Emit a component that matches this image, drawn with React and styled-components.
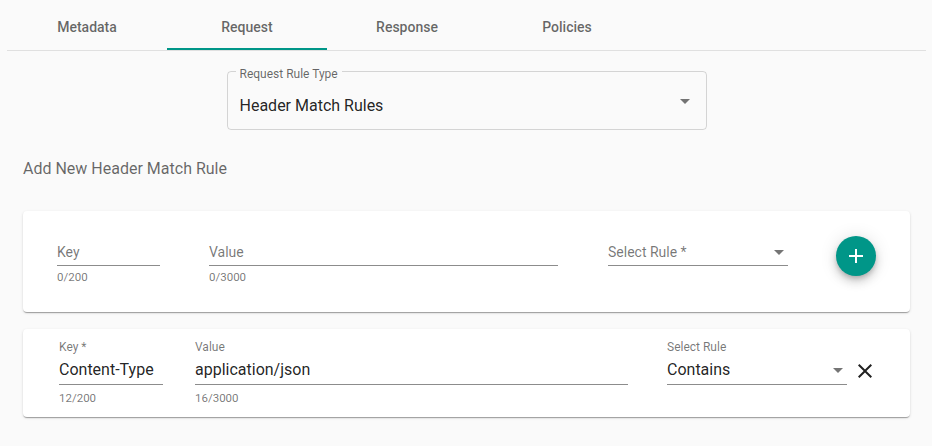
import React from 'react';
import styled, { createGlobalStyle } from 'styled-components';

const GlobalStyle = createGlobalStyle`
  body {
    margin: 0;
    background: #fafafa;
    font-family: Roboto, "Liberation Sans", Arial, sans-serif;
  }
`;

const Page = styled.div`
  width: 932px;
  height: 446px;
  padding: 0 6px 0 7px;
  box-sizing: border-box;
  background: #fafafa;
`;

const TabBar = styled.div`
  display: flex;
  height: 50px;
  border-bottom: 1px solid #e0e0e0;
`;

const Tab = styled.div`
  position: relative;
  width: 160px;
  display: flex;
  align-items: center;
  justify-content: center;
  padding-top: 3px;
  box-sizing: border-box;
  font-size: 14px;
  font-weight: 500;
  color: rgba(0, 0, 0, 0.6);

  &::after {
    content: '';
    display: ${(p) => (p.$active ? 'block' : 'none')};
    position: absolute;
    left: 0;
    right: 0;
    bottom: 0;
    height: 2px;
    background: #009688;
  }
`;

const Body = styled.div`
  padding: 0 16px;
`;

const TypeRow = styled.div`
  display: flex;
  justify-content: center;
  padding-top: 20px;
`;

const OutlinedSelect = styled.div`
  position: relative;
  width: 480px;
  height: 59px;
  box-sizing: border-box;
  border: 1px solid rgba(0, 0, 0, 0.15);
  border-radius: 4px;
  padding: 24px 12px 0;
`;

const NotchLabel = styled.span`
  position: absolute;
  top: -5px;
  left: 8px;
  padding: 0 4px;
  background: #fafafa;
  font-size: 12px;
  line-height: 14px;
  color: rgba(0, 0, 0, 0.6);
`;

const SelectValue = styled.div`
  font-size: 16px;
  line-height: 19px;
  color: rgba(0, 0, 0, 0.87);
`;

const Arrow = styled.svg`
  position: absolute;
  right: ${(p) => p.$right || 0}px;
  top: ${(p) => p.$top || 0}px;
  width: 24px;
  height: 24px;
  fill: rgba(0, 0, 0, 0.54);
`;

const SectionTitle = styled.div`
  margin-top: 29px;
  font-size: 16px;
  line-height: 19px;
  color: rgba(0, 0, 0, 0.6);
`;

const Card = styled.div`
  display: flex;
  align-items: flex-start;
  background: #fff;
  border-radius: 4px;
  box-shadow: 0 2px 1px -1px rgba(0, 0, 0, 0.2), 0 1px 1px 0 rgba(0, 0, 0, 0.14),
    0 1px 3px 0 rgba(0, 0, 0, 0.12);
  margin-top: ${(p) => p.$mt}px;
  padding: ${(p) => p.$pad};
`;

const Field = styled.div`
  position: relative;
  display: flex;
  flex-direction: column;
  width: ${(p) => (p.$w ? `${p.$w}px` : 'auto')};
  flex: ${(p) => (p.$w ? 'none' : '1')};
  margin-left: ${(p) => p.$ml || 0}px;
  margin-top: ${(p) => p.$mt || 0}px;
`;

const FieldLabel = styled.div`
  font-size: 12px;
  line-height: 14px;
  color: rgba(0, 0, 0, 0.54);
  margin-bottom: 6px;
`;

const InputLine = styled.div`
  position: relative;
  border-bottom: 1px solid rgba(0, 0, 0, 0.45);
  font-size: ${(p) => (p.$placeholder ? 14 : 16)}px;
  line-height: ${(p) => (p.$placeholder ? 20 : 19)}px;
  padding-bottom: ${(p) => (p.$placeholder ? 3 : 5)}px;
  color: ${(p) => (p.$placeholder ? 'rgba(0, 0, 0, 0.54)' : 'rgba(0, 0, 0, 0.87)')};
  white-space: nowrap;
`;

const Helper = styled.div`
  margin-top: ${(p) => p.$mt || 6}px;
  font-size: 11.5px;
  line-height: 14px;
  color: rgba(0, 0, 0, 0.54);
`;

const Fab = styled.button`
  flex: none;
  width: 40px;
  height: 40px;
  margin-left: 48px;
  border: none;
  border-radius: 50%;
  background: #009688;
  display: flex;
  align-items: center;
  justify-content: center;
  padding: 0;
  box-shadow: 0 3px 5px -1px rgba(0, 0, 0, 0.2), 0 6px 10px 0 rgba(0, 0, 0, 0.14),
    0 1px 18px 0 rgba(0, 0, 0, 0.12);

  svg {
    width: 24px;
    height: 24px;
    fill: #fff;
  }
`;

const RemoveButton = styled.div`
  flex: none;
  width: 24px;
  height: 24px;
  margin: 19px 0 0 6px;

  svg {
    width: 24px;
    height: 24px;
    fill: rgba(0, 0, 0, 0.87);
  }
`;

const DropIcon = ({ top, right }) => (
  <Arrow viewBox="0 0 24 24" $top={top} $right={right}>
    <path d="M7 10l5 5 5-5z" />
  </Arrow>
);

const tabs = ['Metadata', 'Request', 'Response', 'Policies'];

export default function App() {
  return (
    <Page>
      <GlobalStyle />
      <TabBar>
        {tabs.map((t) => (
          <Tab key={t} $active={t === 'Request'}>
            {t}
          </Tab>
        ))}
      </TabBar>
      <Body>
        <TypeRow>
          <OutlinedSelect>
            <NotchLabel>Request Rule Type</NotchLabel>
            <SelectValue>Header Match Rules</SelectValue>
            <DropIcon top={17} right={9} />
          </OutlinedSelect>
        </TypeRow>
        <SectionTitle>Add New Header Match Rule</SectionTitle>

        <Card $mt={33} $pad="25px 34px 28px">
          <Field $w={103} $mt={6}>
            <InputLine $placeholder>Key</InputLine>
            <Helper $mt={4}>0/200</Helper>
          </Field>
          <Field $ml={49} $mt={6}>
            <InputLine $placeholder>Value</InputLine>
            <Helper $mt={4}>0/3000</Helper>
          </Field>
          <Field $w={180} $ml={50} $mt={6}>
            <InputLine $placeholder>Select Rule *</InputLine>
            <DropIcon top={-2} right={-3} />
          </Field>
          <Fab>
            <svg viewBox="0 0 24 24">
              <path d="M19 13h-6v6h-2v-6H5v-2h6V5h2v6h6v2z" />
            </svg>
          </Fab>
        </Card>

        <Card $mt={17} $pad="11px 33px 12px 36px">
          <Field $w={104}>
            <FieldLabel>Key *</FieldLabel>
            <InputLine>Content-Type</InputLine>
            <Helper>12/200</Helper>
          </Field>
          <Field $ml={32}>
            <FieldLabel>Value</FieldLabel>
            <InputLine>application/json</InputLine>
            <Helper>16/3000</Helper>
          </Field>
          <Field $w={180} $ml={39}>
            <FieldLabel>Select Rule</FieldLabel>
            <InputLine>Contains</InputLine>
            <DropIcon top={18} right={-3} />
          </Field>
          <RemoveButton>
            <svg viewBox="0 0 24 24">
              <path d="M19 6.41L17.59 5 12 10.59 6.41 5 5 6.41 10.59 12 5 17.59 6.41 19 12 13.41 17.59 19 19 17.59 13.41 12z" />
            </svg>
          </RemoveButton>
        </Card>
      </Body>
    </Page>
  );
}
